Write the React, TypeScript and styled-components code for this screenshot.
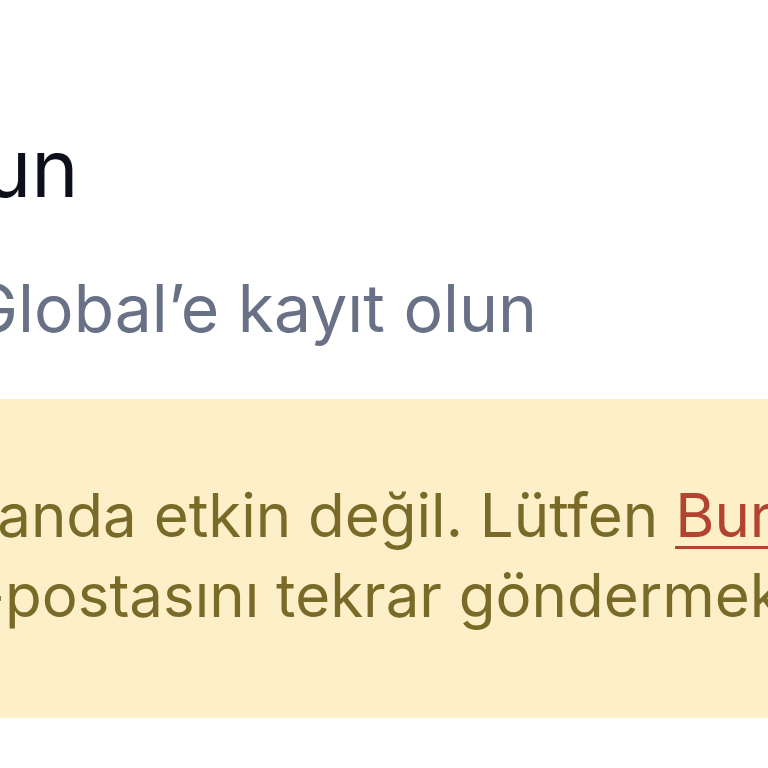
import React from 'react';
import styled, { createGlobalStyle } from 'styled-components';

const GlobalStyle = createGlobalStyle`
  html, body {
    margin: 0;
    padding: 0;
    background: #ffffff;
  }
  body {
    font-family: Inter, "Noto Sans", "Liberation Sans", sans-serif;
  }
`;

// the window only shows a slice of a wider, zoomed-in page
const Viewport = styled.div`
  width: 768px;
  height: 768px;
  overflow: hidden;
  background: #ffffff;
`;

const Page = styled.div`
  margin-left: -383px;
  width: 1700px;
  padding-top: 120px;
  display: flex;
  flex-direction: column;
`;

const Header = styled.header`
  padding-left: 76px;
  display: flex;
  flex-direction: column;
  gap: 44px;
`;

const Heading = styled.h1`
  margin: 0;
  font-size: 80px;
  line-height: 96px;
  font-weight: 400;
  color: #0d0f1a;
  white-space: nowrap;
`;

const Subtitle = styled.p`
  margin: 0;
  font-size: 66px;
  line-height: 96px;
  color: #687185;
  white-space: nowrap;
`;

const Alert = styled.div`
  margin-top: 43px;
  padding: 76px 0 83px;
  background: #fdf0c8;
  color: #7a6a28;
  font-size: 60px;
  line-height: 80px;
  white-space: nowrap;
`;

const Link = styled.a`
  color: #b2432f;
  text-decoration: underline;
  text-underline-offset: 9px;
  text-decoration-thickness: 3px;
`;

export default function App() {
  return (
    <Viewport>
      <GlobalStyle />
      <Page>
        <Header>
          <Heading>Kayıt Olun</Heading>
          <Subtitle>Ücretsiz Global’e kayıt olun</Subtitle>
        </Header>
        <Alert>
          Hesabınız şu anda etkin değil. Lütfen <Link href="#">Buraya tıklayarak</Link> yeni
          <br />
          Doğrulama e-postasını tekrar göndermek için talepte bulunun.
        </Alert>
      </Page>
    </Viewport>
  );
}
